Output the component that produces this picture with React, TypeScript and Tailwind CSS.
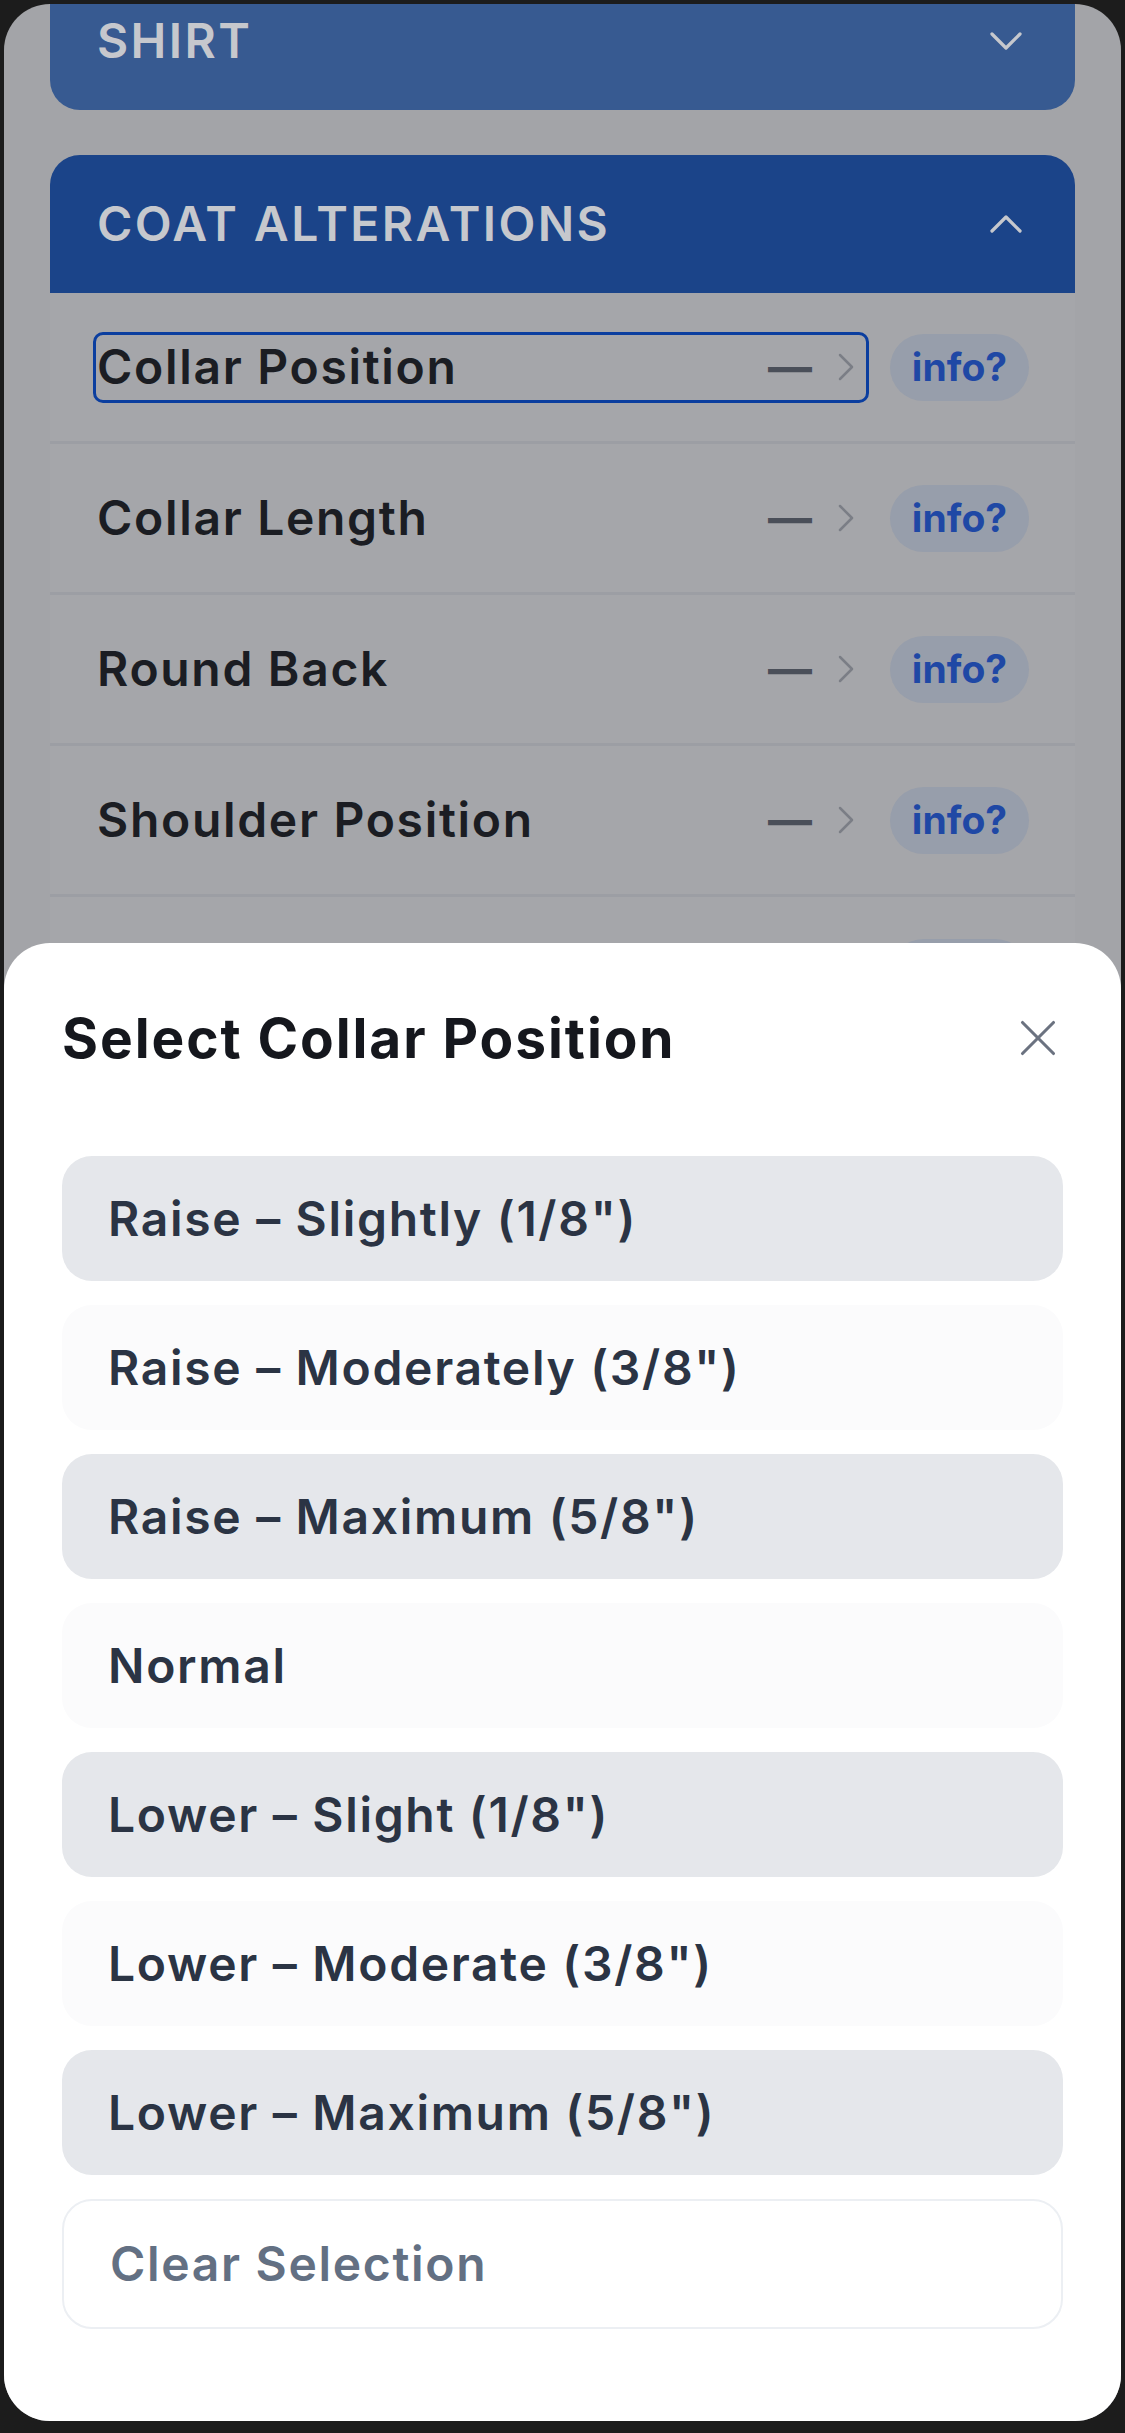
import { ChevronDown, ChevronUp, X } from "lucide-react";

const alterations = ["Collar Position", "Collar Length", "Round Back", "Shoulder Position"];

const choices = [
  "Raise – Slightly (1/8\")",
  "Raise – Moderately (3/8\")",
  "Raise – Maximum (5/8\")",
  "Normal",
  "Lower – Slight (1/8\")",
  "Lower – Moderate (3/8\")",
  "Lower – Maximum (5/8\")",
];

function AlterationRow({ label, focused }: { label: string; focused?: boolean }) {
  return (
    <div className="flex h-[151px] items-center border-b-[3px] border-[#9c9ea4] pl-[47px] pr-[46px]">
      <button
        className={
          "flex h-[63px] flex-1 items-center pr-[11px] text-left " +
          (focused ? "rounded-[6px] outline-[3px] outline-offset-1 outline-[#0b3e9f]" : "")
        }
      >
        <span className="flex-1 text-[48px] font-semibold tracking-[0.035em] text-[#1b1d23]">{label}</span>
        <span className="text-[44px] font-bold leading-none text-[#4a4f59]">—</span>
        <svg width="16" height="28" viewBox="0 0 16 28" className="ml-[26px]" fill="none">
          <polyline points="2,2 14,14 2,26" stroke="#7b7e86" strokeWidth="2.5" strokeLinecap="round" strokeLinejoin="round" />
        </svg>
      </button>
      <span className="ml-[25px] flex h-[67px] w-[139px] items-center justify-center rounded-full bg-[#979eab] text-[39px] font-bold text-[#1f48a5]">
        info?
      </span>
    </div>
  );
}

export default function App() {
  return (
    <div className="h-[2433px] w-[1125px] bg-[#1c1c1c] px-[4px] pt-[4px] pb-[12px] font-[Inter,sans-serif]">
      <div className="flex h-full flex-col overflow-hidden rounded-[46px] bg-[#a3a4a8]">
        {/* Page behind the sheet (dimmed) */}
        <div className="flex-1 overflow-hidden px-[46px]">
          <div className="-mt-[32px] flex flex-col gap-[45px]">
            <div className="flex h-[138px] items-center justify-between rounded-[30px] bg-[#375a91] pl-[47px] pr-[41px]">
              <span className="text-[48px] font-semibold tracking-[0.05em] text-[#c6c8cd]">SHIRT</span>
              <ChevronDown size={56} strokeWidth={1.4} color="#c6c8cd" />
            </div>

            <div className="overflow-hidden rounded-t-[30px] bg-[#a5a6aa]">
              <div className="flex h-[138px] items-center justify-between bg-[#1b4489] pl-[47px] pr-[41px]">
                <span className="text-[48px] font-semibold tracking-[0.05em] text-[#c6c8cd]">COAT ALTERATIONS</span>
                <ChevronUp size={56} strokeWidth={1.4} color="#c6c8cd" />
              </div>
              {alterations.map((a, i) => (
                <AlterationRow key={a} label={a} focused={i === 0} />
              ))}
              {/* next row, hidden under the sheet */}
              <div className="flex h-[151px] items-center justify-end pr-[46px]">
                <span className="h-[67px] w-[139px] rounded-full bg-[#979eab]" />
              </div>
            </div>
          </div>
        </div>

        {/* Bottom sheet */}
        <div className="h-[1478px] shrink-0 rounded-t-[46px] bg-white px-[58px] pt-[57px]">
          <div className="flex h-[76px] items-center justify-between">
            <h2 className="text-[55px] font-bold leading-none tracking-[0.035em] text-[#15171d]">Select Collar Position</h2>
            <button className="-mr-[6px]">
              <X size={62} strokeWidth={1.2} color="#6b7280" />
            </button>
          </div>

          <div className="mt-[80px] flex flex-col gap-[24px]">
            {choices.map((c, i) => (
              <button
                key={c}
                className={
                  "flex h-[125px] items-center rounded-[30px] px-[46px] text-left text-[48px] font-semibold tracking-[0.035em] text-[#2b3444] " +
                  (i % 2 === 0 ? "bg-[#e5e7eb]" : "bg-[#fbfbfc]")
                }
              >
                {c}
              </button>
            ))}
            <button className="flex h-[130px] items-center rounded-[30px] border-2 border-[#eceff3] bg-white px-[46px] text-left text-[48px] font-semibold tracking-[0.035em] text-[#637083]">
              Clear Selection
            </button>
          </div>
        </div>
      </div>
    </div>
  );
}
